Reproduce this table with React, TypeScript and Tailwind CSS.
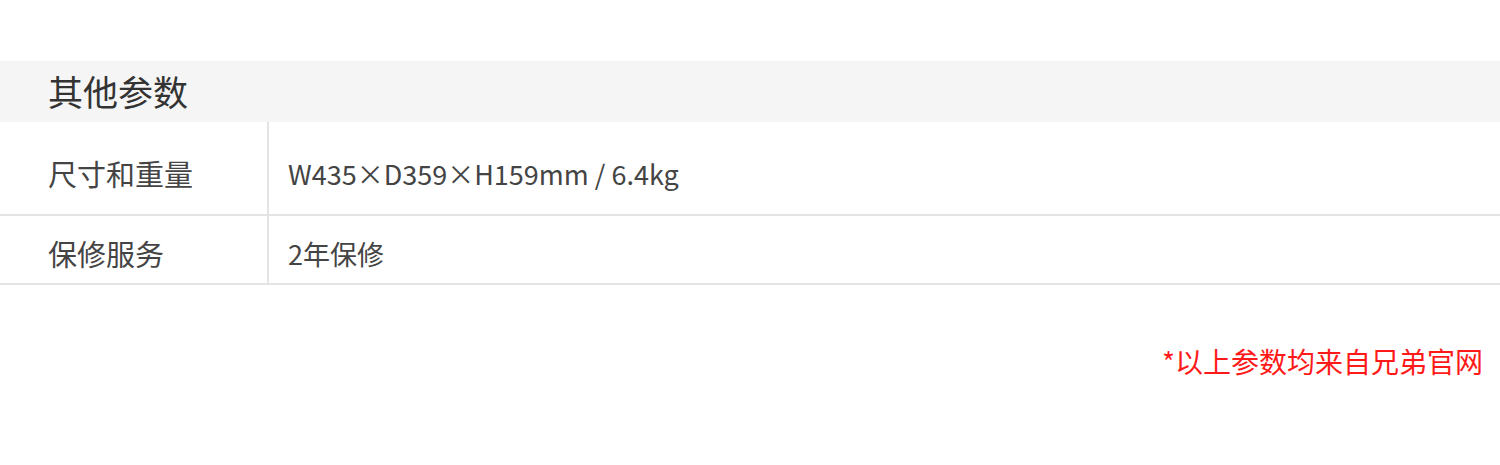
const font = { fontFamily: '"Noto Sans CJK SC", "Noto Sans", sans-serif' };

const rows = [
  { label: "尺寸和重量", value: "W435×D359×H159mm / 6.4kg", h: "h-[92px] pt-[12px]" },
  { label: "保修服务", value: "2年保修", h: "h-[67px] pt-[9px]" },
];

export default function App() {
  return (
    <div className="w-[1500px] h-[465px] bg-white pt-[61px]" style={font}>
      <div className="h-[61px] bg-[#f5f5f5] flex items-center pl-[48px]">
        <span className="text-[35px] text-[#333] leading-none -mt-[2px]">其他参数</span>
      </div>
      {rows.map((r) => (
        <div key={r.label} className="flex border-b-2 border-[#e4e4e4]">
          <div className={`w-[269px] border-r-2 border-[#e4e4e4] flex items-center pl-[48px] text-[29px] text-[#444] ${r.h}`}>
            {r.label}
          </div>
          <div className={`flex-1 flex items-center pl-[19px] text-[27px] text-[#444] ${r.h}`}>
            {r.value}
          </div>
        </div>
      ))}
      <div className="flex justify-end pr-[17px] pt-[62px]">
        <span className="text-[28px] text-[#ff1a1a] leading-none">*以上参数均来自兄弟官网</span>
      </div>
    </div>
  );
}
